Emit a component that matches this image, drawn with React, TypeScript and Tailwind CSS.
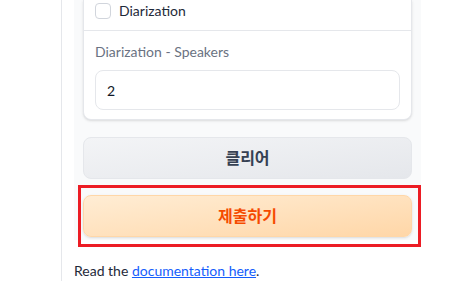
export default function App() {
  return (
    <div
      className="flex h-[281px] w-[453px] overflow-hidden bg-white text-[14px] text-gray-800"
      style={{ fontFamily: "Lato, 'Noto Sans CJK KR', sans-serif" }}
    >
      <div className="w-[61px] shrink-0" />
      <div className="flex w-[360px] shrink-0 flex-col border-l border-gray-200 pl-[12px]">
        {/* Panel */}
        <div className="flex h-[247px] flex-col gap-[16px] bg-gray-50 px-[9px]">
          {/* Card */}
          <div className="flex flex-col rounded-b-lg border border-t-0 border-gray-200 bg-white shadow-sm">
            <div className="flex h-[31px] items-start gap-[8px] border-b border-gray-200 px-[11px] pt-[3px]">
              <div className="h-[16px] w-[16px] rounded-[4px] border border-gray-300 bg-white" />
              <span className="leading-[16px] text-gray-800">Diarization</span>
            </div>
            <div className="flex flex-col px-[11px] pb-[9px] pt-[14px]">
              <span className="leading-[14px] text-gray-500">Diarization - Speakers</span>
              <div className="mt-[11px] flex h-[40px] items-center rounded-[8px] border border-gray-200 bg-white px-[11px] text-gray-900">
                2
              </div>
            </div>
          </div>

          <button className="mt-[1px] h-[42px] rounded-[8px] border border-gray-200 bg-gradient-to-br from-gray-100 to-gray-200 text-[16px] font-semibold text-gray-700">
            클리어
          </button>

          <div className="relative">
            <button className="h-[42px] w-full rounded-[8px] border border-orange-200 bg-gradient-to-br from-orange-100 to-orange-200 text-[16px] font-semibold text-orange-600 shadow-sm">
              제출하기
            </button>
            <div className="pointer-events-none absolute -bottom-[10px] -left-[5px] -right-[9px] -top-[10px] border-[3px] border-[#ec1c24]" />
          </div>
        </div>

        <p className="mt-[20px] text-gray-800">
          Read the{" "}
          <a href="#" className="text-blue-600 underline">
            documentation here
          </a>
          .
        </p>
      </div>
    </div>
  );
}
